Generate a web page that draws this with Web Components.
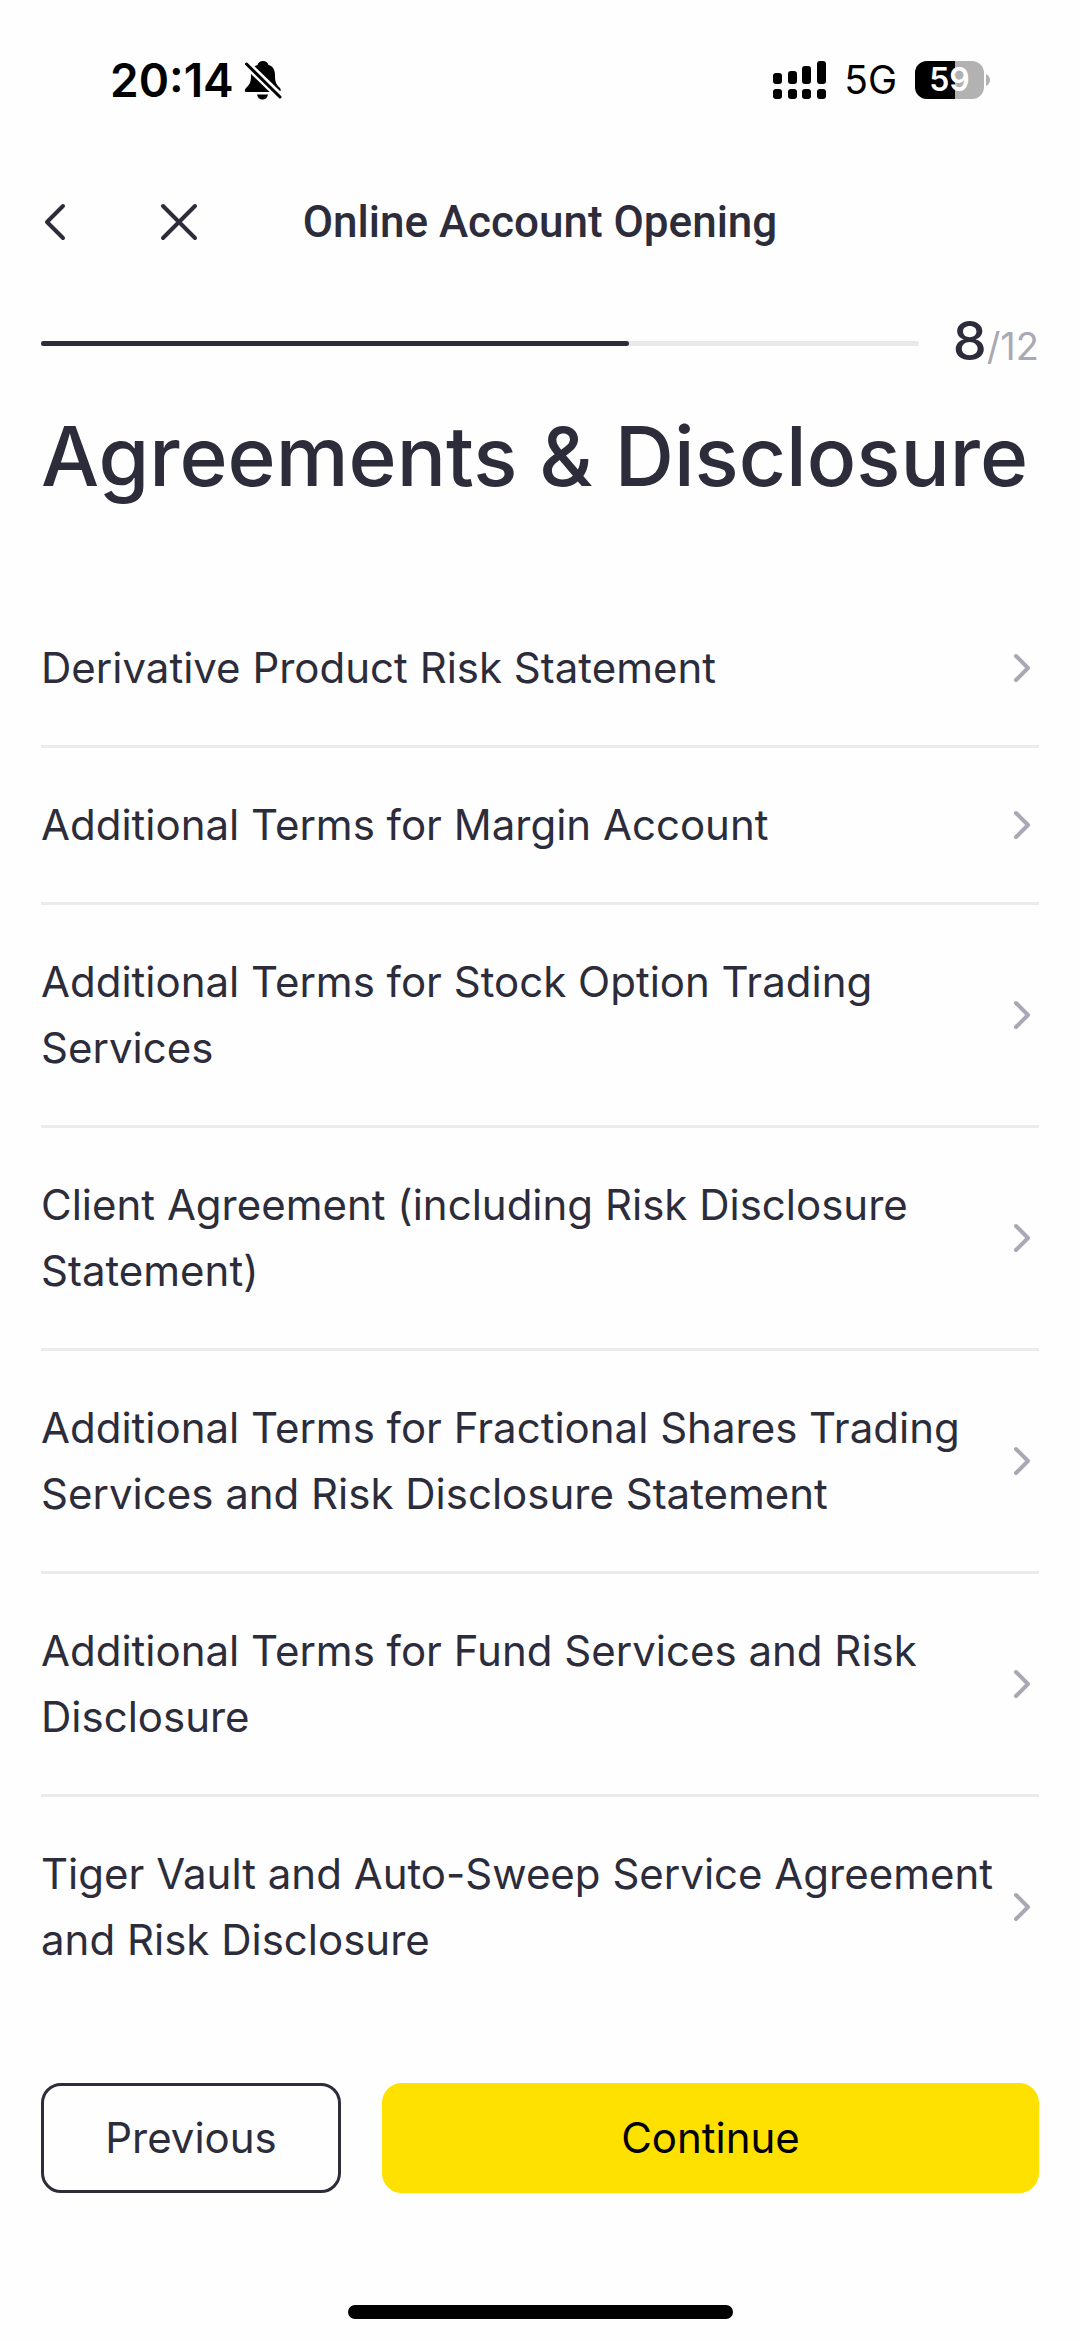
<!DOCTYPE html>
<html lang="en">
<head>
<meta charset="utf-8">
<meta name="viewport" content="width=device-width, initial-scale=1">
<title>Online Account Opening</title>
<style>
  :root {
    --ink: #2c2c3a;
    --muted: #a9a9b5;
    --line: #ebebed;
    --brand: #ffe100;
    --gutter: 41px;
  }
  html, body { margin: 0; background: #fefefe; }
  body {
    color: var(--ink);
    font-family: Inter, "Liberation Sans", sans-serif;
    font-size: 42px;
    line-height: 66px;
  }
</style>
</head>
<body>
<account-opening-page></account-opening-page>

<script>
const define = (name, html) => {
  const template = document.createElement('template');
  template.innerHTML = html;
  customElements.define(name, class extends HTMLElement {
    constructor() {
      super();
      this.attachShadow({ mode: 'open' }).append(template.content.cloneNode(true));
    }
  });
};

define('status-bar', `
  <style>
    :host { display: flex; justify-content: space-between; align-items: center; padding: 52px 90px 0 110px; color: #000; }
    div { display: flex; align-items: center; height: 56px; }
    svg { display: block; }
    .time { font-size: 46px; font-weight: 600; line-height: 56px; }
    .bell { margin-left: 10px; }
    .net { font-size: 39px; line-height: 56px; margin: 0 18px 0 17px; }
    .battery { position: relative; width: 75px; height: 38px; }
    .battery span { position: absolute; left: 0; top: 0; width: 69px; text-align: center; font-size: 32px; font-weight: 600; line-height: 38px; color: #fff; }
  </style>
  <div>
    <span class="time">20:14</span>
    <svg class="bell" width="38" height="40" viewBox="0 0 38 40" role="img" aria-label="Silent mode">
      <path d="M19 1c-3 0-5 2-5.500 4C9 6 7 10 7 15c0 7-1 9-4 12-3 3-3 5 0 5h32c2 0 2.500-3 0-5-3-3-4-5-4-12 0-5-2-9-6.500-10C24 3 22 1 19 1z"/>
      <path d="M13 34.500h11c-.5 3-2.500 5-5.500 5s-5-2-5.500-5z"/>
      <path d="M2 3.500L37 37.500" stroke="#fefefe" stroke-width="8"/>
      <path d="M2.500 4L36 37" stroke="#000" stroke-width="3" stroke-linecap="round"/>
    </svg>
  </div>
  <div>
    <svg width="54" height="38" viewBox="0 0 54 38" role="img" aria-label="Signal">
      <rect x="0" y="12" width="9" height="11" rx="3"/><rect x="15" y="10" width="9" height="13" rx="3"/>
      <rect x="29" y="5" width="9" height="18" rx="3"/><rect x="44" y="0" width="9" height="23" rx="3"/>
      <rect x="0" y="28" width="9" height="10" rx="3"/><rect x="15" y="28" width="9" height="10" rx="3"/>
      <rect x="29" y="28" width="9" height="10" rx="3"/><rect x="44" y="28" width="9" height="10" rx="3"/>
    </svg>
    <span class="net">5G</span>
    <div class="battery">
      <svg width="75" height="38" viewBox="0 0 75 38" aria-hidden="true">
        <rect width="69" height="38" rx="12" fill="#b2b2b2"/>
        <path d="M12 0H40V38H12A12 12 0 0 1 0 26V12A12 12 0 0 1 12 0z"/>
        <path d="M71 13q4 2 4 6t-4 6z" fill="#b2b2b2"/>
      </svg>
      <span>59</span>
    </div>
  </div>
`);

define('nav-header', `
  <style>
    :host { display: grid; grid-template-columns: 1fr auto 1fr; align-items: center; padding: 0 var(--gutter); height: 100px; }
    nav { display: flex; gap: 88px; }
    button { appearance: none; border: 0; background: none; padding: 0; color: inherit; }
    svg { display: block; fill: none; stroke: currentColor; stroke-width: 4; stroke-linecap: round; stroke-linejoin: round; }
    h1 { margin: 0; font: 500 44px/66px Roboto, "Liberation Sans", sans-serif; }
  </style>
  <nav>
    <button type="button" aria-label="Back"><svg width="28" height="40" viewBox="0 0 28 40"><path d="M22 4L6 20L22 36"/></svg></button>
    <button type="button" aria-label="Close"><svg width="44" height="40" viewBox="0 0 44 40"><path d="M6 4L38 36M38 4L6 36"/></svg></button>
  </nav>
  <h1><slot></slot></h1>
`);

define('step-progress', `
  <style>
    :host { display: flex; align-items: center; gap: 34px; padding: 0 var(--gutter); }
    .track { flex: 1; height: 5px; border-radius: 3px; background: #e9e9ea; }
    .fill { width: 67%; height: 5px; border-radius: 3px; background: var(--ink); }
    .count { line-height: 66px; font-size: 38px; color: var(--muted); }
    b { font-size: 54px; font-weight: 500; color: var(--ink); }
  </style>
  <div class="track"><div class="fill"></div></div>
  <div class="count"><b><slot name="current"></slot></b><slot name="total"></slot></div>
`);

define('agreement-row', `
  <style>
    :host { display: block; border-bottom: 3px solid var(--line); }
    :host(:last-of-type) { border-bottom: 0; }
    a { display: flex; align-items: center; justify-content: space-between; gap: 12px; padding: 44px 6px 44px 0; color: inherit; text-decoration: none; }
    svg { flex: none; display: block; fill: none; stroke: var(--muted); stroke-width: 4; stroke-linecap: round; stroke-linejoin: round; }
  </style>
  <a href="#"><span><slot></slot></span>
    <svg width="20" height="32" viewBox="0 0 20 32" aria-hidden="true"><path d="M3 4L15 16L3 28"/></svg></a>
`);

define('action-button', `
  <style>
    :host { display: block; }
    button { box-sizing: border-box; width: 100%; height: 110px; padding: 0; border: 3px solid var(--ink); border-radius: 20px; background: transparent; color: var(--ink); font: inherit; }
    :host([primary]) button { border-color: var(--brand); background: var(--brand); color: #000; }
  </style>
  <button type="button"><slot></slot></button>
`);

define('home-indicator', `
  <style>
    :host { display: flex; justify-content: center; }
    div { width: 385px; height: 14px; border-radius: 7px; background: #000; }
  </style>
  <div></div>
`);

define('account-opening-page', `
  <style>
    :host { display: flex; flex-direction: column; box-sizing: border-box; min-height: 100vh; padding-bottom: 22px; }
    nav-header { margin-top: 64px; }
    step-progress { margin-top: 36px; }
    h2 { margin: 28px 0 84px; padding: 0 var(--gutter); font-size: 82px; font-weight: 500; line-height: 100px; }
    main { flex: 1; }
    section { padding: 0 var(--gutter); }
    footer { display: grid; grid-template-columns: 300px 1fr; gap: 41px; padding: 0 var(--gutter) 112px; }
  </style>
  <status-bar></status-bar>
  <nav-header>Online Account Opening</nav-header>
  <main>
    <step-progress><span slot="current">8</span><span slot="total">/12</span></step-progress>
    <h2>Agreements &amp; Disclosure</h2>
    <section>
      <agreement-row>Derivative Product Risk Statement</agreement-row>
      <agreement-row>Additional Terms for Margin Account</agreement-row>
      <agreement-row>Additional Terms for Stock Option Trading Services</agreement-row>
      <agreement-row>Client Agreement (including Risk Disclosure Statement)</agreement-row>
      <agreement-row>Additional Terms for Fractional Shares Trading Services and Risk Disclosure Statement</agreement-row>
      <agreement-row>Additional Terms for Fund Services and Risk Disclosure</agreement-row>
      <agreement-row>Tiger Vault and Auto-Sweep Service Agreement and Risk Disclosure</agreement-row>
    </section>
  </main>
  <footer>
    <action-button>Previous</action-button>
    <action-button primary>Continue</action-button>
  </footer>
  <home-indicator></home-indicator>
`);
</script>
</body>
</html>
